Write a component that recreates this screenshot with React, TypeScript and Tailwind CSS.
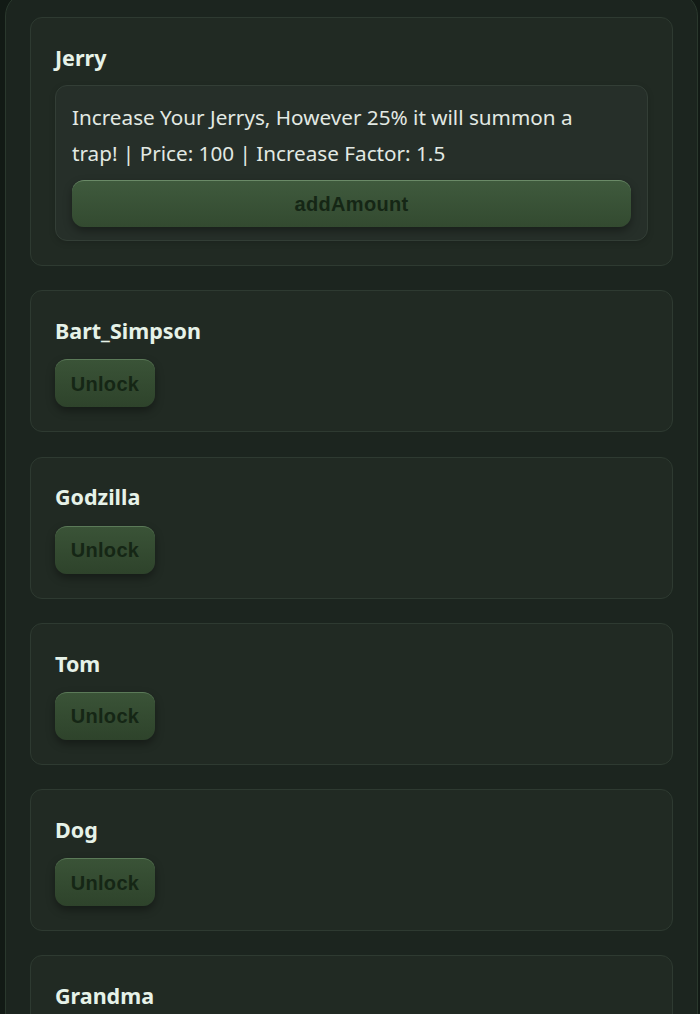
import React from "react";

const sans = { fontFamily: '"Noto Sans", "Open Sans", sans-serif' };

function UnlockCard({ name }: { name: string }) {
  return (
    <div className="rounded-xl border border-[#2e3a31] bg-[#212a23] px-6 py-6">
      <div className="h-8 flex items-center text-[21.5px] font-bold text-[#e6f2e8]" style={sans}>
        {name}
      </div>
      <button className="mt-3 h-[48px] w-[100px] rounded-xl border-t border-[#5b7a58] bg-gradient-to-b from-[#3a5337] to-[#2e432b] text-[20px] font-bold tracking-[0.3px] text-[#152615] shadow-[0_4px_8px_rgba(0,0,0,0.35)] font-['Liberation_Sans',Arial,sans-serif]">
        Unlock
      </button>
    </div>
  );
}

export default function App() {
  return (
    <div className="h-[1014px] w-[700px] overflow-hidden bg-[#121a15]">
      <div className="ml-[5px] mt-[-8px] w-[693px] rounded-3xl border border-[#2a382d] bg-[#1c251f] px-6 pt-6 pb-10">
        <div className="flex flex-col gap-[24.3px]">
          <div className="rounded-xl border border-[#2e3a31] bg-[#212a23] px-6 pt-6 pb-6">
            <div className="h-8 flex items-center text-[21.5px] font-bold text-[#e6f2e8]" style={sans}>
              Jerry
            </div>
            <div className="mt-[11px] rounded-xl border border-[#333e36] bg-[#262f29] px-4 pt-[13px] pb-[13px] shadow-[0_2px_6px_rgba(0,0,0,0.15)]">
              <p className="pr-[30px] text-[20.7px] leading-[36px] text-[#e2e9e3]" style={sans}>
                Increase Your Jerrys, However 25% it will summon a trap! | Price: 100 | Increase Factor: 1.5
              </p>
              <button className="mt-[9px] h-[47px] w-full rounded-xl border-t border-[#6a8a67] bg-gradient-to-b from-[#3f5a3d] to-[#334a30] text-[20px] font-bold tracking-[0.3px] text-[#152615] shadow-[0_4px_8px_rgba(0,0,0,0.35)] font-['Liberation_Sans',Arial,sans-serif]">
                addAmount
              </button>
            </div>
          </div>
          <UnlockCard name="Bart_Simpson" />
          <UnlockCard name="Godzilla" />
          <UnlockCard name="Tom" />
          <UnlockCard name="Dog" />
          <UnlockCard name="Grandma" />
        </div>
      </div>
    </div>
  );
}
